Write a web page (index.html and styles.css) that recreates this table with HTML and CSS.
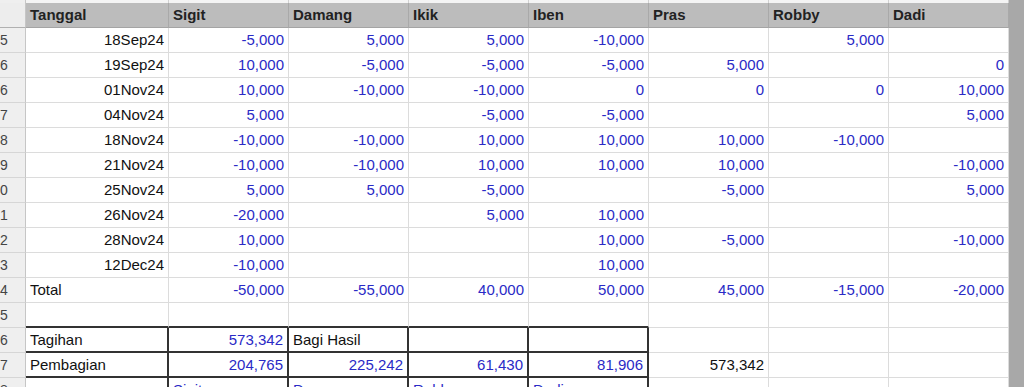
FILE: index.html
```html
<!DOCTYPE html>
<html lang="id">
<head>
<meta charset="utf-8">
<title>Sheet</title>
<link rel="stylesheet" href="styles.css">
</head>
<body>
<div class="screen">
  <div class="sheet">
    <div class="c strip rh"></div><div class="c strip"></div><div class="c strip"></div><div class="c strip"></div><div class="c strip"></div><div class="c strip"></div><div class="c strip"></div><div class="c strip"></div><div class="c strip"></div>

    <div class="c rh corner"></div><div class="c h">Tanggal</div><div class="c h">Sigit</div><div class="c h">Damang</div><div class="c h">Ikik</div><div class="c h">Iben</div><div class="c h">Pras</div><div class="c h">Robby</div><div class="c h">Dadi</div>

    <div class="c rh">5</div><div class="c d">18Sep24</div><div class="c n">-5,000</div><div class="c n">5,000</div><div class="c n">5,000</div><div class="c n">-10,000</div><div class="c n"></div><div class="c n">5,000</div><div class="c n"></div>

    <div class="c rh">6</div><div class="c d">19Sep24</div><div class="c n">10,000</div><div class="c n">-5,000</div><div class="c n">-5,000</div><div class="c n">-5,000</div><div class="c n">5,000</div><div class="c n"></div><div class="c n">0</div>

    <div class="c rh">6</div><div class="c d">01Nov24</div><div class="c n">10,000</div><div class="c n">-10,000</div><div class="c n">-10,000</div><div class="c n">0</div><div class="c n">0</div><div class="c n">0</div><div class="c n">10,000</div>

    <div class="c rh">7</div><div class="c d">04Nov24</div><div class="c n">5,000</div><div class="c n"></div><div class="c n">-5,000</div><div class="c n">-5,000</div><div class="c n"></div><div class="c n"></div><div class="c n">5,000</div>

    <div class="c rh">8</div><div class="c d">18Nov24</div><div class="c n">-10,000</div><div class="c n">-10,000</div><div class="c n">10,000</div><div class="c n">10,000</div><div class="c n">10,000</div><div class="c n">-10,000</div><div class="c n"></div>

    <div class="c rh">9</div><div class="c d">21Nov24</div><div class="c n">-10,000</div><div class="c n">-10,000</div><div class="c n">10,000</div><div class="c n">10,000</div><div class="c n">10,000</div><div class="c n"></div><div class="c n">-10,000</div>

    <div class="c rh">0</div><div class="c d">25Nov24</div><div class="c n">5,000</div><div class="c n">5,000</div><div class="c n">-5,000</div><div class="c n"></div><div class="c n">-5,000</div><div class="c n"></div><div class="c n">5,000</div>

    <div class="c rh">1</div><div class="c d">26Nov24</div><div class="c n">-20,000</div><div class="c n"></div><div class="c n">5,000</div><div class="c n">10,000</div><div class="c n"></div><div class="c n"></div><div class="c n"></div>

    <div class="c rh">2</div><div class="c d">28Nov24</div><div class="c n">10,000</div><div class="c n"></div><div class="c n"></div><div class="c n">10,000</div><div class="c n">-5,000</div><div class="c n"></div><div class="c n">-10,000</div>

    <div class="c rh">3</div><div class="c d">12Dec24</div><div class="c n">-10,000</div><div class="c n"></div><div class="c n"></div><div class="c n">10,000</div><div class="c n"></div><div class="c n"></div><div class="c n"></div>

    <div class="c rh">4</div><div class="c t">Total</div><div class="c n">-50,000</div><div class="c n">-55,000</div><div class="c n">40,000</div><div class="c n">50,000</div><div class="c n">45,000</div><div class="c n">-15,000</div><div class="c n">-20,000</div>

    <div class="c rh">5</div><div class="c t bb"></div><div class="c n bb"></div><div class="c n bb"></div><div class="c n bb"></div><div class="c n bb"></div><div class="c n"></div><div class="c n"></div><div class="c n"></div>

    <div class="c rh">6</div><div class="c t bb br">Tagihan</div><div class="c n bb br">573,342</div><div class="c t bb br">Bagi Hasil</div><div class="c n bb br"></div><div class="c n bb br"></div><div class="c n"></div><div class="c n"></div><div class="c n"></div>

    <div class="c rh">7</div><div class="c t bb br">Pembagian</div><div class="c n bb br">204,765</div><div class="c n bb br">225,242</div><div class="c n bb br">61,430</div><div class="c n bb br">81,906</div><div class="c k">573,342</div><div class="c n"></div><div class="c n"></div>

    <div class="c rh">8</div><div class="c t br"></div><div class="c tb br">Sigit</div><div class="c tb br">Damang</div><div class="c tb br">Robby</div><div class="c tb br">Dadi</div><div class="c n"></div><div class="c n"></div><div class="c n"></div>
  </div>
  <div class="scroll"></div>
</div>
</body>
</html>
```

FILE: styles.css
```css
html, body {
  margin: 0;
  padding: 0;
  background: #ffffff;
}

body {
  width: 1024px;
  height: 387px;
  overflow: hidden;
  font-family: "Liberation Sans", Arial, sans-serif;
  font-size: 15px;
}

.screen {
  display: flex;
  width: 1024px;
  height: 387px;
  overflow: hidden;
}

.sheet {
  display: grid;
  grid-template-columns: 26px 143px repeat(7, 120px);
  grid-template-rows: 3px;
  grid-auto-rows: 25px;
  width: 1009px;
  flex: none;
  background: #ffffff;
}

.scroll {
  flex: 1;
  background: #a8a8a8;
}

.c {
  box-sizing: border-box;
  border-right: 1px solid #dcdcdc;
  border-bottom: 1px solid #dcdcdc;
  display: flex;
  align-items: center;
  padding: 0 4px;
  white-space: nowrap;
  overflow: hidden;
  color: #111111;
  line-height: 24px;
}

.strip {
  background: #f4f4f4;
  border-bottom: none;
  border-right-color: #d0d0d0;
}

.rh {
  background: #efefef;
  border-right: 1px solid #c6c6c6;
  border-bottom-color: #d6d6d6;
  color: #444444;
  font-size: 14px;
  padding: 0;
  justify-content: flex-start;
}

.corner {
  background: #ededed;
  border-bottom-color: #b0b0b0;
}

.h {
  background: #bcbcbc;
  font-weight: bold;
  color: #222222;
  border-right-color: #a9a9a9;
  border-bottom-color: #a4a4a4;
}

.d,
.k {
  justify-content: flex-end;
  color: #111111;
}

.n {
  justify-content: flex-end;
  color: #2a2ac6;
}

.t {
  justify-content: flex-start;
  color: #111111;
}

.tb {
  justify-content: flex-start;
  color: #2a2ac6;
}

.bb {
  border-bottom: 2px solid #333333;
}

.br {
  border-right: 2px solid #333333;
}
```
